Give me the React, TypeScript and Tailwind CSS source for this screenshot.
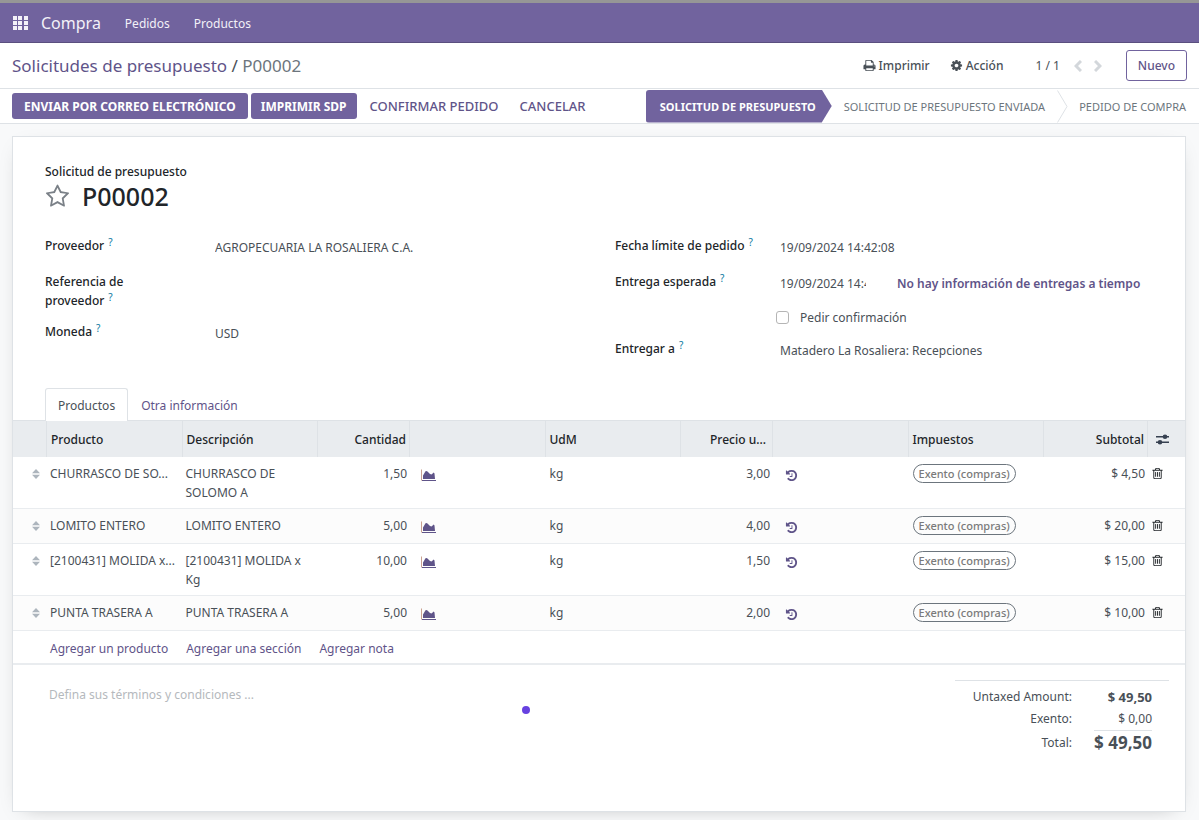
import React, { useState } from 'react';

interface OrderLine {
  id: number;
  product: string;
  description: string;
  quantity: string;
  uom: string;
  price: string;
  tax: string;
  subtotal: string;
}

const ORDER_LINES: OrderLine[] = [
  { id: 1, product: 'CHURRASCO DE SO...', description: 'CHURRASCO DE SOLOMO A', quantity: '1,50', uom: 'kg', price: '3,00', tax: 'Exento (compras)', subtotal: '$ 4,50' },
  { id: 2, product: 'LOMITO ENTERO', description: 'LOMITO ENTERO', quantity: '5,00', uom: 'kg', price: '4,00', tax: 'Exento (compras)', subtotal: '$ 20,00' },
  { id: 3, product: '[2100431] MOLIDA x...', description: '[2100431] MOLIDA x Kg', quantity: '10,00', uom: 'kg', price: '1,50', tax: 'Exento (compras)', subtotal: '$ 15,00' },
  { id: 4, product: 'PUNTA TRASERA A', description: 'PUNTA TRASERA A', quantity: '5,00', uom: 'kg', price: '2,00', tax: 'Exento (compras)', subtotal: '$ 10,00' },
];

// Icons
const PATHS = {
  print: 'M448 1536h896v-256h-896v256zm0-640h896v-384h-160q-40 0-68-28t-28-68v-160h-640v640zm1152 64q0-26-19-45t-45-19-45 19-19 45 19 45 45 19 45-19 19-45zm128 0v416q0 13-9.5 22.5t-22.5 9.5h-224v160q0 40-28 68t-68 28h-960q-40 0-68-28t-28-68v-160h-224q-13 0-22.5-9.5t-9.5-22.5v-416q0-79 56.5-135.5t135.5-56.5h64v-544q0-40 28-68t68-28h672q40 0 88 20t76 48l152 152q28 28 48 76t20 88v256h64q79 0 135.5 56.5t56.5 135.5z',
  cog: 'M1152 896q0-106-75-181t-181-75-181 75-75 181 75 181 181 75 181-75 75-181zm512-109v222q0 12-8 23t-20 13l-185 28q-19 54-39 91 35 50 107 138 10 12 10 25t-9 23q-27 37-99 108t-94 71q-12 0-26-9l-138-108q-44 23-91 38-16 136-29 186-7 28-36 28h-222q-14 0-24.5-8.5t-11.5-21.5l-28-184q-49-16-90-37l-141 107q-10 9-25 9-14 0-25-11-126-114-165-168-7-10-7-23 0-12 8-23 15-21 51-66.5t54-70.5q-27-50-41-99l-183-27q-13-2-21-12.5t-8-23.5v-222q0-12 8-23t19-13l186-28q14-46 39-92-40-57-107-138-10-12-10-24 0-10 9-23 26-36 98.5-107.5t94.5-71.5q13 0 26 10l138 107q44-23 91-38 16-136 29-186 7-28 36-28h222q14 0 24.5 8.5t11.5 21.5l28 184q49 16 90 37l142-107q9-9 24-9 13 0 25 10 129 119 165 170 7 8 7 22 0 12-8 23-15 21-51 66.5t-54 70.5q26 50 41 98l183 28q13 2 21 12.5t8 23.5z',
  history: 'M1664 896q0 156-61 298t-164 245-245 164-298 61q-172 0-327-72.5t-264-204.5q-7-10-6.5-22.5t8.5-20.5l137-138q10-9 25-9 16 2 23 12 73 95 179 147t225 52q104 0 198.5-40.5t163.5-109.5 109.5-163.5 40.5-198.5-40.5-198.5-109.5-163.5-163.5-109.5-198.5-40.5q-98 0-188 35.5t-160 101.5l137 138q31 30 14 69-17 40-59 40h-448q-26 0-45-19t-19-45v-448q0-42 40-59 39-17 69 14l130 129q107-101 244.5-156.5t284.5-55.5q156 0 298 61t245 164 164 245 61 298zm-640-288v448q0 14-9 23t-23 9h-320q-14 0-23-9t-9-23v-64q0-14 9-23t23-9h224v-352q0-14 9-23t23-9h64q14 0 23 9t9 23z',
  trash: 'M704 736v576q0 14-9 23t-23 9h-64q-14 0-23-9t-9-23v-576q0-14 9-23t23-9h64q14 0 23 9t9 23zm256 0v576q0 14-9 23t-23 9h-64q-14 0-23-9t-9-23v-576q0-14 9-23t23-9h64q14 0 23 9t9 23zm256 0v576q0 14-9 23t-23 9h-64q-14 0-23-9t-9-23v-576q0-14 9-23t23-9h64q14 0 23 9t9 23zm128 724v-948h-896v948q0 22 7 40.5t14.5 27 10.5 8.5h832q3 0 10.5-8.5t14.5-27 7-40.5zm-672-1076h448l-48-117q-7-9-17-11h-317q-10 2-17 11zm928 32v64q0 14-9 23t-23 9h-96v948q0 83-47 143.5t-113 60.5h-832q-66 0-113-58.5t-47-141.5v-952h-96q-14 0-23-9t-9-23v-64q0-14 9-23t23-9h309l70-167q15-37 54-63t79-26h320q40 0 79 26t54 63l70 167h309q14 0 23 9t9 23z',
  star: 'M1201 1004l306-297-422-62-189-382-189 382-422 62 306 297-73 421 378-199 377 199zm527-357q0 22-26 48l-363 354 86 500q1 7 1 20 0 50-41 50-19 0-40-12l-449-236-449 236q-22 12-40 12-21 0-31.5-14.5t-10.5-35.5q0-6 2-20l86-500-364-354q-25-27-25-48 0-37 56-46l502-73 225-455q19-41 49-41t49 41l225 455 502 73q56 9 56 46z',
};

const Icon: React.FC<{ name: keyof typeof PATHS; className: string }> = ({ name, className }) => (
  <svg viewBox="0 0 1792 1792" fill="currentColor" className={className} aria-hidden="true"><path d={PATHS[name]} /></svg>
);

const AppsIcon = () => (
  <svg viewBox="0 0 15 14" className="h-[14px] w-[15px]" fill="currentColor" shapeRendering="crispEdges" aria-hidden="true">
    {[0, 5, 10].map(y => [0, 5, 11].map(x => <rect key={`${x}-${y}`} x={x} y={y} width="4" height="4" />))}
  </svg>
);

const ChartIcon = () => (
  <svg viewBox="0 0 15 12" className="h-3 w-[15px]" aria-hidden="true">
    <path d="M0.5 0.5v11" stroke="#c9a08f" />
    <path d="M1 11.5h14" stroke="#5f5489" />
    <path d="M2 10V6.5l2.5-4.2q1-.8 2 .2l2.5 2.5 1.5.4 2.2-2 .8 1L14 10z" fill="#5f5489" />
  </svg>
);

const HandleIcon = () => (
  <svg viewBox="0 0 8 10" className="h-[10px] w-2" fill="#adb5bd" aria-hidden="true"><path d="M0 4.3L4 0l4 4.3zM0 5.7L4 10l4-4.3z" /></svg>
);

const SlidersIcon = () => (
  <svg viewBox="0 0 13 11" className="h-[11px] w-[13px]" fill="#374151" aria-hidden="true">
    <path d="M0 2h13v1.4H0zM0 7.6h13V9H0z" />
    <circle cx="9" cy="2.7" r="2.3" /><circle cx="4" cy="8.3" r="2.3" />
  </svg>
);

const Chevron: React.FC<{ d: string }> = ({ d }) => (
  <svg viewBox="0 0 8 12" className="h-3 w-2" fill="none" stroke="#d3d7db" strokeWidth="3" aria-hidden="true"><path d={d} /></svg>
);

const Help = () => <sup className="-top-1 ml-1 text-[10px] leading-none font-normal text-[#0b78a0]">?</sup>;

const FieldRow: React.FC<{ label: string; htmlFor: string; wide?: boolean; children?: React.ReactNode }> = ({ label, htmlFor, wide, children }) => (
  <div className={`flex min-h-9 ${wide ? 'pb-3' : ''}`}>
    <label htmlFor={htmlFor} className={`shrink-0 font-medium text-[#212529] ${wide ? 'w-[110px] mr-15' : 'w-[165px] whitespace-nowrap'}`}>
      {label}<Help />
    </label>
    <div className="flex min-w-0 flex-1 items-start pt-[2px]">{children}</div>
  </div>
);

const App: React.FC = () => {
  const [activeTab, setActiveTab] = useState<'products' | 'other'>('products');
  const [confirm, setConfirm] = useState(false);

  const tabClass = (isActive: boolean) =>
    isActive
      ? 'h-[33px] rounded-t-[3px] border border-b-0 border-[#dee2e6] bg-white px-3 text-[#495057]'
      : 'h-[33px] border border-transparent border-b-0 px-3 text-[#5f5489]';

  return (
    <div className="flex min-h-screen flex-col bg-[#f8f9fa] font-['Noto_Sans',sans-serif] text-[12px] leading-[19px] text-[#495057]">
      {/* Navbar */}
      <nav className="flex h-[43px] shrink-0 items-center border-t-3 border-b border-t-[#969696] border-b-[#5a4f7f] bg-[#71639e] px-[13px] pt-px text-[#f3f1f8]">
        <button aria-label="Inicio" className="mr-[13px]"><AppsIcon /></button>
        <a href="#" className="mr-6 text-[16px]">Compra</a>
        <button className="mr-6">Pedidos</button>
        <button>Productos</button>
      </nav>

      {/* Control panel */}
      <header className="flex h-[46px] shrink-0 items-center justify-between border-b border-[#dee2e6] bg-white px-3">
        <div className="text-[17px]">
          <a href="#" className="text-[#5f5489]">Solicitudes de presupuesto</a> / <span className="text-[#6c757d]">P00002</span>
        </div>
        <div className="flex items-center">
          <button className="mr-5 flex items-center gap-[3px] font-medium"><Icon name="print" className="h-[13px] w-[13px]" />Imprimir</button>
          <button className="mr-8 flex items-center gap-[3px] font-medium"><Icon name="cog" className="h-[13px] w-[13px]" />Acción</button>
          <span className="mr-[14px]">1 / 1</span>
          <button aria-label="Anterior" className="mr-3"><Chevron d="M7 1L2 6l5 5" /></button>
          <button aria-label="Siguiente" className="mr-6"><Chevron d="M1 1l5 5-5 5" /></button>
          <button className="h-[31px] rounded-[3px] border border-[#71639e] px-[11px] font-medium text-[#5f5489]">Nuevo</button>
        </div>
      </header>

      {/* Status bar */}
      <div className="flex h-[35px] shrink-0 items-center justify-between border-b border-[#dee2e6] bg-white pl-3">
        <div className="flex items-center">
          <button className="mr-[3px] h-[26px] rounded-[3px] bg-[#71639e] px-3 font-bold text-white">ENVIAR POR CORREO ELECTRÓNICO</button>
          <button className="mr-[3px] h-[26px] rounded-[3px] bg-[#71639e] px-[10px] font-bold text-white">IMPRIMIR SDP</button>
          <button className="mr-px h-[26px] px-[10px] text-[13px] font-medium text-[#5f5489]">CONFIRMAR PEDIDO</button>
          <button className="h-[26px] px-[10px] text-[13px] font-medium text-[#5f5489]">CANCELAR</button>
        </div>
        <div className="flex h-full items-center text-[11px] text-[#6c757d]">
          <button className="h-[33px] rounded-l-[3px] bg-[#71639e] pr-4 pl-[14px] font-bold text-white [clip-path:polygon(0_0,calc(100%-10px)_0,100%_50%,calc(100%-10px)_100%,0_100%)]">SOLICITUD DE PRESUPUESTO</button>
          <button className="px-3">SOLICITUD DE PRESUPUESTO ENVIADA</button>
          <svg viewBox="0 0 11 33" className="h-[33px] w-[11px]" fill="none" stroke="#dee2e6" aria-hidden="true"><path d="M0.5 0.5l9.5 16-9.5 16" /></svg>
          <button className="pr-[13px] pl-[11px]">PEDIDO DE COMPRA</button>
        </div>
      </div>

      {/* Form sheet */}
      <main className="relative mx-3 mt-3 mb-2 mr-[13px] flex flex-1 flex-col border border-[#dee2e6] bg-white shadow-[0_5px_20px_-12px_rgba(0,0,0,0.35)]">
        <div className="px-8 pt-[25px]">
          <p className="font-medium text-[#212529]">Solicitud de presupuesto</p>
          <div className="flex h-[30px] items-center gap-3">
            <button aria-label="Prioridad" className="text-[#7a8087]"><Icon name="star" className="h-[25px] w-[25px]" /></button>
            <h1 className="text-[25px] leading-[30px] font-medium text-[#212529]">P00002</h1>
          </div>

          <div className="mt-[25px] grid h-[152px] grid-cols-[570px_1fr]">
            <div>
              <FieldRow label="Proveedor" htmlFor="vendor" wide>
                <input id="vendor" className="w-full" defaultValue="AGROPECUARIA LA ROSALIERA C.A." />
              </FieldRow>
              <FieldRow label="Referencia de proveedor" htmlFor="vendor-ref" wide>
                <input id="vendor-ref" className="w-full" />
              </FieldRow>
              <FieldRow label="Moneda" htmlFor="currency" wide>
                <input id="currency" className="w-full" defaultValue="USD" />
              </FieldRow>
            </div>
            <div>
              <FieldRow label="Fecha límite de pedido" htmlFor="deadline">
                <input id="deadline" className="w-full" defaultValue="19/09/2024 14:42:08" />
              </FieldRow>
              <FieldRow label="Entrega esperada" htmlFor="expected">
                <input id="expected" className="mr-[31px] w-[86px]" defaultValue="19/09/2024 14:42:08" />
                <button className="font-semibold whitespace-nowrap text-[#5f5489]">No hay información de entregas a tiempo</button>
              </FieldRow>
              <div className="flex h-[31px] items-start pl-[161px]">
                <label className="flex items-center gap-[11px]">
                  <input type="checkbox" checked={confirm} onChange={e => setConfirm(e.target.checked)} className="h-[13px] w-[13px] appearance-none rounded-[3px] border border-[#b5b5b5] bg-white checked:bg-[#71639e]" />
                  Pedir confirmación
                </label>
              </div>
              <FieldRow label="Entregar a" htmlFor="deliver-to">
                <input id="deliver-to" className="w-full" defaultValue="Matadero La Rosaliera: Recepciones" />
              </FieldRow>
            </div>
          </div>

          <div className="relative z-10 -mb-px flex">
            <button onClick={() => setActiveTab('products')} className={tabClass(activeTab === 'products')}>Productos</button>
            <button onClick={() => setActiveTab('other')} className={tabClass(activeTab === 'other')}>Otra información</button>
          </div>
        </div>

        {/* Order lines */}
        <table className="w-full table-fixed border-separate border-spacing-0">
          <colgroup>
            <col className="w-[34px]" />
            <col />
            <col />
            <col className="w-[92px]" />
            <col />
            <col />
            <col className="w-[92px]" />
            <col />
            <col />
            <col className="w-[104px]" />
            <col className="w-[37px]" />
          </colgroup>
          <thead>
            <tr className="h-[37px] bg-[#e9ecef] text-left text-[#212529] [&>th]:border-t [&>th]:border-r [&>th]:border-[#dee2e6] [&>th]:px-1 [&>th]:font-medium">
              <th />
              <th>Producto</th>
              <th>Descripción</th>
              <th className="pr-[3px]! text-right">Cantidad</th>
              <th />
              <th>UdM</th>
              <th className="text-right"><span className="mr-[2px]">Precio u...</span></th>
              <th />
              <th>Impuestos</th>
              <th className="pr-[3px]! text-right">Subtotal</th>
              <th className="border-r-0!"><button aria-label="Columnas" className="flex pl-1"><SlidersIcon /></button></th>
            </tr>
          </thead>
          <tbody>
            {ORDER_LINES.map(line => (
              <tr key={line.id} className="h-[35px] align-top even:bg-[#fcfcfc] [&>td]:border-b [&>td]:border-[#e9ecef] [&>td]:px-[3px] [&>td]:pt-[7px] [&>td]:pb-[6px]">
                <td><span className="flex h-[19px] items-center justify-end pr-1"><HandleIcon /></span></td>
                <td className="whitespace-nowrap">{line.product}</td>
                <td>{line.description}</td>
                <td className="text-right">{line.quantity}</td>
                <td><button aria-label="Previsión" className="ml-2 flex h-[21px] items-center"><ChartIcon /></button></td>
                <td className="pl-1!">{line.uom}</td>
                <td className="text-right">{line.price}</td>
                <td><button aria-label="Historial" className="ml-[9px] flex h-[21px] items-center pt-[2px] text-[#5f5489]"><Icon name="history" className="h-[13px] w-[13px]" /></button></td>
                <td className="pl-1!"><span className="inline-block h-[19px] rounded-full border border-[#6c757d] px-[5px] align-top text-[11px] leading-[17px] font-medium whitespace-nowrap text-[#7a7a7a]">{line.tax}</span></td>
                <td className="text-right">{line.subtotal}</td>
                <td><button aria-label="Eliminar" className="flex h-[19px] items-center text-[#212529]"><Icon name="trash" className="h-[13px] w-[13px]" /></button></td>
              </tr>
            ))}
          </tbody>
        </table>
        <div className="flex h-[34px] items-center gap-[18px] border-b-2 border-[#e9ecef] pt-[2px] pl-[37px] text-[#5f5489]">
          <a href="#">Agregar un producto</a>
          <a href="#">Agregar una sección</a>
          <a href="#">Agregar nota</a>
        </div>

        {/* Terms and totals */}
        <div className="flex justify-between pt-[15px] pr-4 pb-[51px] pl-9">
          <textarea aria-label="Términos y condiciones" rows={2} placeholder="Defina sus términos y condiciones ..." className="mt-[5px] w-[420px] resize-none placeholder:text-[#b5b9bd]" />
          <dl className="grid w-[214px] grid-cols-[117px_1fr] border-t border-[#dee2e6] pt-[5px] pr-[17px] text-right">
            <dt className="leading-[22px]">Untaxed Amount:</dt>
            <dd className="text-[13px] leading-[22px] font-bold">$ 49,50</dd>
            <dt className="leading-[22px]">Exento:</dt>
            <dd className="leading-[22px]">$ 0,00</dd>
            <dt className="leading-[26px]">Total:</dt>
            <dd className="ml-auto border-t border-[#dee2e6] text-[17px] leading-[24px] font-bold">$ 49,50</dd>
          </dl>
        </div>
        <span className="absolute top-[569px] left-[509px] h-2 w-2 rounded-full bg-[#6741e0]" />
      </main>
    </div>
  );
};

export default App;
